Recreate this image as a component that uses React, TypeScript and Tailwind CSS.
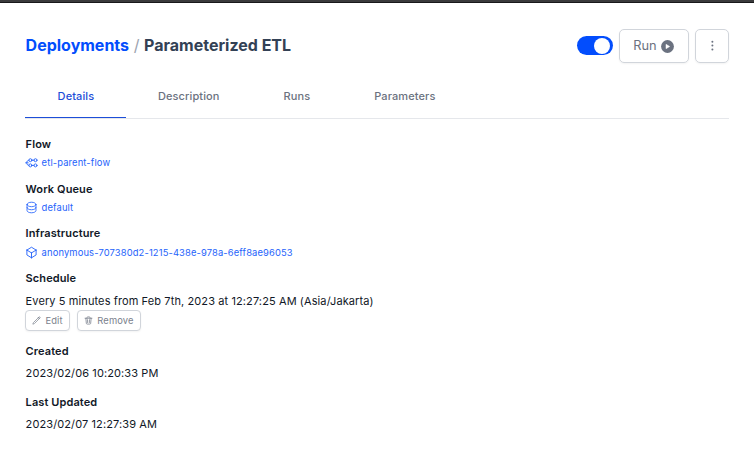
import React from "react";

const stroke = {
  fill: "none",
  stroke: "currentColor",
  strokeLinecap: "round" as const,
  strokeLinejoin: "round" as const,
};

function FlowIcon() {
  return (
    <svg className="h-[13px] w-[13px] shrink-0" viewBox="0 0 13 13" strokeWidth={0.9} {...stroke}>
      <circle cx="5.400" cy="4.200" r="1.500" />
      <circle cx="10.500" cy="4.200" r="1.500" />
      <circle cx="5.400" cy="9.400" r="1.500" />
      <circle cx="10.500" cy="9.400" r="1.500" />
      <path d="M6.900 4.200h2.100M6.900 9.400h2.100M3.900 4.200C.8 4.200 .8 9.400 3.900 9.400M.6 6.800h2.600" />
    </svg>
  );
}

function DatabaseIcon() {
  return (
    <svg className="h-[13px] w-[13px] shrink-0" viewBox="0 0 24 24" strokeWidth={1.6} {...stroke}>
      <path d="M20.25 6.375c0 2.278-3.694 4.125-8.25 4.125S3.750 8.653 3.750 6.375m16.5 0c0-2.278-3.694-4.125-8.25-4.125S3.750 4.097 3.750 6.375m16.5 0v11.250c0 2.278-3.694 4.125-8.250 4.125s-8.250-1.847-8.250-4.125V6.375m16.5 5.625c0 2.278-3.694 4.125-8.250 4.125s-8.250-1.847-8.250-4.125" />
    </svg>
  );
}

function CubeIcon() {
  return (
    <svg className="h-[13px] w-[13px] shrink-0" viewBox="0 0 24 24" strokeWidth={1.7} {...stroke}>
      <path d="M20.500 7.500l-8.500-5.250L3.500 7.500m17 0l-8.500 5.250m8.500-5.250v9l-8.500 5.250M3.500 7.500l8.500 5.250M3.500 7.500v9l8.500 5.250m0-9v9" />
    </svg>
  );
}

function PencilIcon() {
  return (
    <svg className="h-[9px] w-[9px] shrink-0" viewBox="0 0 24 24" strokeWidth={1.9} {...stroke}>
      <path d="M16.862 4.487l1.687-1.688a1.875 1.875 0 112.652 2.652L6.832 19.820a4.500 4.500 0 01-1.897 1.130l-2.685.8.8-2.685a4.500 4.500 0 011.130-1.897L16.863 4.487zm0 0L19.500 7.125" />
    </svg>
  );
}

function TrashIcon() {
  return (
    <svg className="h-[9px] w-[9px] shrink-0" viewBox="0 0 24 24" strokeWidth={2.1} {...stroke}>
      <path d="M2.800 6h18.400M5 6l1.200 13.500a2.250 2.250 0 0 0 2.200 2h7.200a2.250 2.250 0 0 0 2.200-2L19 6M8 6V4.200A1.800 1.800 0 0 1 9.800 2.400h4.400A1.800 1.800 0 0 1 16 4.200V6M9.400 10l.3 7.500M14.600 10l-.3 7.500" />
    </svg>
  );
}

function PlayIcon() {
  return (
    <svg className="h-[13px] w-[13px]" viewBox="0 0 13 13">
      <circle cx="6.500" cy="6.500" r="6.400" fill="#6b7280" />
      <path d="M5 4.300v4.400l3.700-2.200z" fill="white" stroke="white" strokeWidth=".5" strokeLinejoin="round" />
    </svg>
  );
}

const tabs = ["Details", "Description", "Runs", "Parameters"];

function Label({ children }: { children: React.ReactNode }) {
  return <h2 className="h-4 text-[11px] leading-[17px] font-semibold tracking-[0.1px] text-[#111827]">{children}</h2>;
}

function Resource({ icon, children }: { icon: React.ReactNode; children: React.ReactNode }) {
  return (
    <a className="-ml-[0.600px] mt-1 flex h-[13px] items-center gap-[3.600px] text-[9.400px] text-[#2563fb]">
      {icon}
      <span className="leading-[15px] tracking-[0.130px]">{children}</span>
    </a>
  );
}

function SmallButton({ icon, width, children }: { icon: React.ReactNode; width: string; children: React.ReactNode }) {
  return (
    <button className={`flex h-[21px] items-center justify-center gap-[4px] rounded-[4px] border border-[#d1d5db] bg-white text-[9.400px] text-[#7b818d] shadow-xs ${width}`}>
      {icon}
      <span className="pt-px leading-4 tracking-[0.130px]">{children}</span>
    </button>
  );
}

export default function App() {
  return (
    <main className="h-[450px] w-[754px] overflow-hidden bg-white font-['Inter',sans-serif] text-[11px] tracking-[0.105px] text-[#111827]">
      <div className="h-[3px] border-b border-[#18191b] bg-[#3a3a3c]" />
      <div className="pr-[25px] pl-[25.600px]">
        <header className="flex h-[60px] items-end justify-between">
          <h1 className="flex h-[36px] items-center text-[16px] leading-6 font-bold tracking-normal text-[#334155]">
            <a className="font-bold text-[#024dfd]">Deployments</a>
            <span className="mx-[4.600px] font-normal text-[#9ca3af]">/</span>
            <span>Parameterized ETL</span>
          </h1>
          <div className="flex items-center gap-[6px]">
            <button className="mb-px flex h-[19px] w-9 items-center justify-end rounded-full bg-[#024dfd] pr-[3px]">
              <span className="h-4 w-4 rounded-full bg-white" />
            </button>
            <button className="flex h-[34px] w-[70px] items-center justify-center gap-[4.500px] rounded-[5px] border border-[#d1d5db] pr-[0.500px] text-[12.800px] tracking-normal text-[#6b7280] shadow-xs">
              <span>Run</span>
              <PlayIcon />
            </button>
            <button className="flex h-[34px] w-[34px] items-center justify-center rounded-[5px] border border-[#d1d5db] text-[#6b7280] shadow-xs">
              <svg className="h-3 w-3" viewBox="0 0 12 12" fill="currentColor">
                <circle cx="6.400" cy="1.800" r="1" />
                <circle cx="6.400" cy="5.600" r="1" />
                <circle cx="6.400" cy="9.400" r="1" />
              </svg>
            </button>
          </div>
        </header>
        <nav className="-ml-[0.600px] mt-[12px] flex h-11 border-b border-[#e5e7eb]">
          {tabs.map((tab, i) => (
            <button
              key={tab}
              className={
                i === 0
                  ? "flex h-[43px] items-start border-b border-[#1d4ed8] pr-[31.700px] pl-[32.600px] pt-[13px] leading-[17px] font-medium text-[#1d4ed8]"
                  : "flex h-[43px] items-start px-8 pt-[13px] leading-[17px] font-medium text-[#6b7280]"
              }
            >
              {tab}
            </button>
          ))}
        </nav>
        <section className="pt-[17px]">
          <div className="h-[45px]">
            <Label>Flow</Label>
            <Resource icon={<FlowIcon />}>etl-parent-flow</Resource>
          </div>
          <div className="h-[44px]">
            <Label>Work Queue</Label>
            <Resource icon={<DatabaseIcon />}>default</Resource>
          </div>
          <div className="h-[45px]">
            <Label>Infrastructure</Label>
            <div className="pt-px">
              <Resource icon={<CubeIcon />}>anonymous-707380d2-1215-438e-978a-6eff8ae96053</Resource>
            </div>
          </div>
          <div className="h-[73px]">
            <Label>Schedule</Label>
            <p className="mt-[7px] h-4 leading-[17px]">Every 5 minutes from Feb 7th, 2023 at 12:27:25 AM (Asia/Jakarta)</p>
            <div className="-ml-[0.600px] mt-px flex gap-[7px]">
              <SmallButton width="w-[45px]" icon={<PencilIcon />}>Edit</SmallButton>
              <SmallButton width="w-[64px]" icon={<TrashIcon />}>Remove</SmallButton>
            </div>
          </div>
          <div className="h-[51px]">
            <Label>Created</Label>
            <p className="mt-[6px] leading-[17px]">2023/02/06 10:20:33 PM</p>
          </div>
          <div>
            <Label>Last Updated</Label>
            <p className="mt-[6px] leading-[17px]">2023/02/07 12:27:39 AM</p>
          </div>
        </section>
      </div>
    </main>
  );
}
